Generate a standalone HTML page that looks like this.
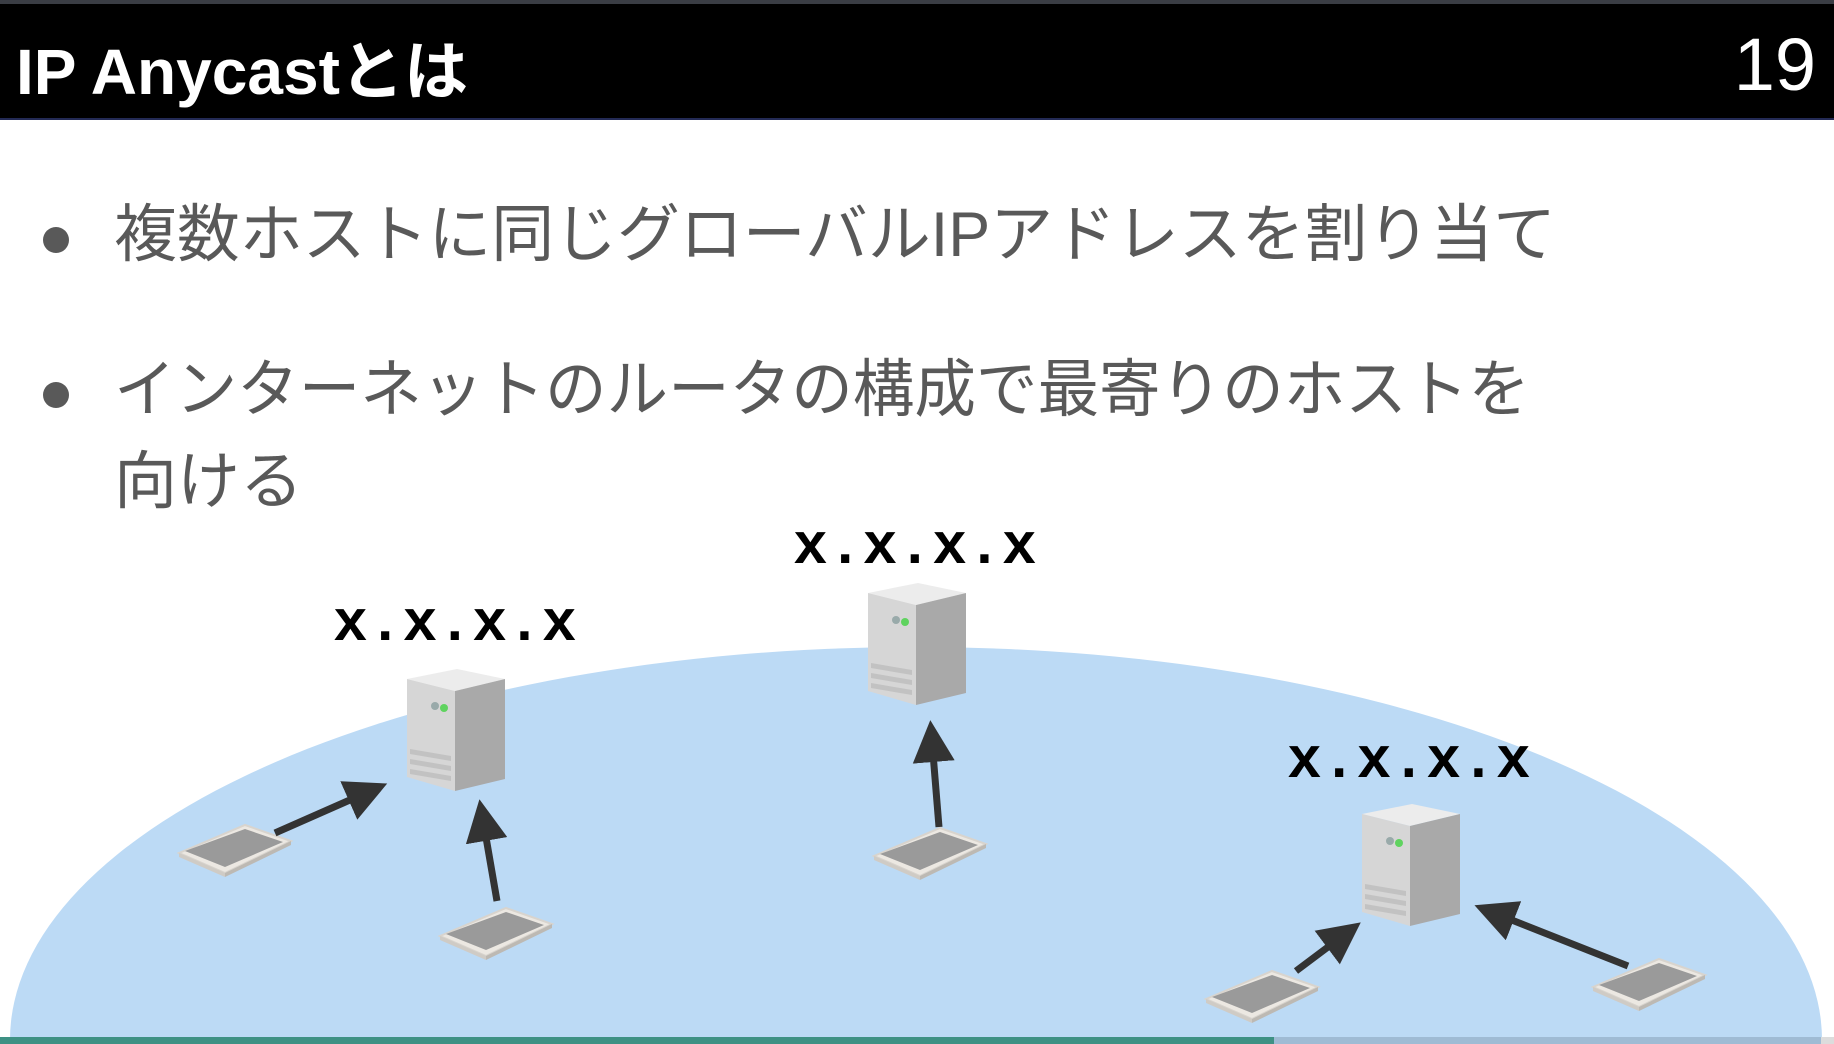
<!DOCTYPE html>
<html><head><meta charset="utf-8"><style>
html,body{margin:0;padding:0;width:1834px;height:1044px;overflow:hidden;background:#fff}
svg{display:block}
</style></head><body>
<svg width="1834" height="1044" viewBox="0 0 1834 1044" xmlns="http://www.w3.org/2000/svg">
<defs>
<clipPath id="c"><rect x="0" y="0" width="1834" height="1044"/></clipPath>
<g id="srv">
<polygon points="0,10 50,0 98,10 48,22" fill="#ececec"/>
<polygon points="0,10 48,22 48,122 0,108" fill="#d6d6d6"/>
<polygon points="48,22 98,10 98,110 48,122" fill="#a9a9a9"/>
<circle cx="28" cy="37" r="4" fill="#9aa"/>
<circle cx="37" cy="39" r="4" fill="#5fd35f"/>
<polygon points="3,80 44,87 44,92 3,85" fill="#c2c2c2"/>
<polygon points="3,90 44,97 44,102 3,95" fill="#c2c2c2"/>
<polygon points="3,100 44,107 44,112 3,105" fill="#c2c2c2"/>
</g>
<g id="rt">
<polygon points="0,28 66,0 112,16 46,48" fill="#ece8e2" stroke="#d8d4ce" stroke-width="2"/>
<polygon points="6,26 66,4 104,17 46,42" fill="#9a9a9a"/>
<polygon points="0,28 46,48 46,52 0,32" fill="#cfcbc5"/>
<polygon points="46,48 112,16 112,20 46,52" fill="#bdb9b3"/>
</g>
<marker id="ah" markerWidth="6" markerHeight="6" refX="3" refY="3" orient="auto" markerUnits="strokeWidth">
<path d="M0,0 L6,3 L0,6 z" fill="#333"/>
</marker>
</defs>
<g clip-path="url(#c)">
<rect x="0" y="0" width="1834" height="4" fill="#3a3d44"/>
<rect x="0" y="4" width="1834" height="115" fill="#000"/>
<rect x="0" y="118" width="1834" height="2" fill="#232a55"/>
<text x="16" y="94" textLength="452" lengthAdjust="spacingAndGlyphs" font-family="Liberation Sans, Noto Sans CJK JP, sans-serif" font-weight="bold" font-size="64" fill="#fff">IP Anycastとは</text>
<text x="1816" y="90" text-anchor="end" font-family="Liberation Sans, sans-serif" font-size="74" fill="#fff">19</text>

<ellipse cx="916" cy="1040" rx="906" ry="393" fill="#bcdaf5"/>

<g font-family="Liberation Sans, Noto Sans CJK JP, sans-serif" font-size="63" fill="#595959">
<circle cx="56" cy="240" r="13" fill="#595959"/>
<text x="114" y="256" textLength="1442" lengthAdjust="spacingAndGlyphs">複数ホストに同じグローバルIPアドレスを割り当て</text>
<circle cx="56" cy="395" r="13" fill="#595959"/>
<text x="114" y="411" textLength="1416" lengthAdjust="spacingAndGlyphs">インターネットのルータの構成で最寄りのホストを</text>
<text x="114" y="503">向ける</text>
</g>

<g font-family="Liberation Mono, monospace" font-weight="bold" font-size="58" fill="#000">
<text x="333" y="640">x.x.x.x</text>
<text x="793" y="563">x.x.x.x</text>
<text x="1287" y="777">x.x.x.x</text>
</g>

<use href="#srv" x="407" y="669"/>
<use href="#srv" x="868" y="583"/>
<use href="#srv" x="1362" y="804"/>

<use href="#rt" x="179" y="825"/>
<use href="#rt" x="440" y="908"/>
<use href="#rt" x="874" y="828"/>
<use href="#rt" x="1206" y="971"/>
<use href="#rt" x="1593" y="959"/>

<g stroke="#333" stroke-width="7" fill="none" marker-end="url(#ah)">
<line x1="275" y1="833" x2="368" y2="792"/>
<line x1="497" y1="901" x2="483" y2="820"/>
<line x1="939" y1="827" x2="932" y2="741"/>
<line x1="1296" y1="971" x2="1344" y2="935"/>
<line x1="1628" y1="966" x2="1494" y2="913"/>
</g>

<rect x="0" y="1037" width="1274" height="7" fill="#3e9184"/>
<rect x="1274" y="1037" width="547" height="7" fill="#9fbbd4"/>
<rect x="1821" y="1037" width="13" height="7" fill="#dcdcdc"/>
</g>
</svg>
</body></html>
